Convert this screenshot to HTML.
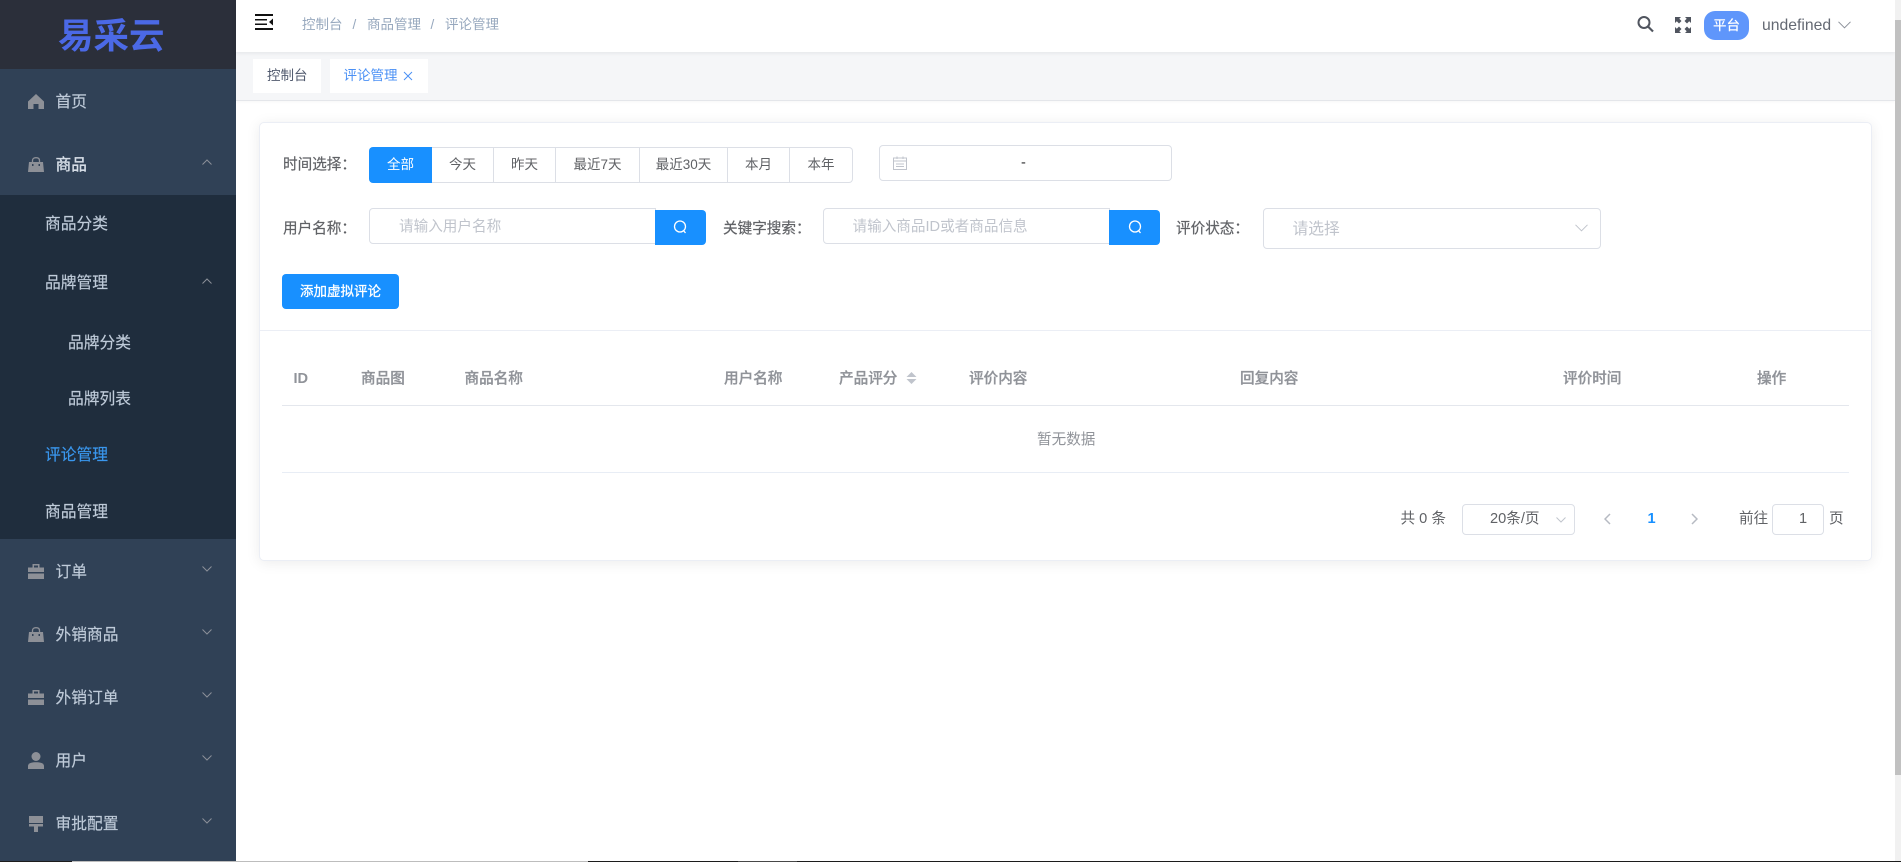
<!DOCTYPE html>
<html lang="zh-CN"><head><meta charset="utf-8"><title>评论管理</title>
<style>
html,body{margin:0;padding:0;width:1901px;height:862px;overflow:hidden;background:#fff}
body{position:relative;font-family:"Liberation Sans","Noto Sans CJK SC",sans-serif}
div,span,svg{position:absolute;box-sizing:border-box}
.t{white-space:nowrap;line-height:20px;height:20px;filter:blur(.25px)}
.m{font-size:15.75px;color:#bfcbd9;-webkit-text-stroke:.15px currentColor}
.l{font-size:14.6px;color:#606266;-webkit-text-stroke:.2px currentColor}
.r{top:147px;height:36px;border:1px solid #dcdfe6;border-left:0;font-size:13.5px;color:#606266;text-align:center;line-height:34px;background:#fff;white-space:nowrap}
.b{font-size:14.6px;color:#909399;font-weight:500;top:369px;-webkit-text-stroke:.3px currentColor}
.i{border:1px solid #dcdfe6;border-radius:4px;background:#fff}
.p{font-size:14.6px;color:#c0c4cc}
.g{font-size:14.6px;color:#606266;top:509px}
.c{fill:none;stroke:#8b9099;stroke-width:1}
</style></head><body>

<!-- sidebar -->
<div style="left:0;top:0;width:236px;height:862px;background:#304156"></div>
<div style="left:0;top:0;width:236px;height:69px;background:#2b2f3a"></div>
<div style="left:0;top:195px;width:236px;height:344px;background:#1f2d3d"></div>
<span class="t" style="left:58px;top:16px;height:40px;line-height:40px;font-size:35.5px;font-weight:700;color:#4b69e6">易采云</span>

<svg style="left:28px;top:94px" width="16" height="15" viewBox="0 0 16 15"><path fill="#8d9097" d="M8 0L16 7.500V15H10.500V10H5.500V15H0V7.500Z"/></svg>
<span class="t m" style="left:55.5px;top:93px">首页</span>

<svg style="left:28px;top:157px" width="16" height="15" viewBox="0 0 16 15"><path fill="#8d9097" d="M1 5H15L16 15H0Z"/><path fill="none" stroke="#8d9097" stroke-width="1.300" d="M4.500 5V3.500C4.500 1.500 6 .7 8 .7s3.500.8 3.500 2.800V5"/><path fill="#304156" d="M4 7h1.500v2H4zM10.500 7H12v2h-1.500z"/></svg>
<span class="t m" style="left:55.5px;top:156px;color:#d5dde6;font-weight:500">商品</span>
<svg class="c" style="left:202px;top:159px" width="10" height="6" viewBox="0 0 10 6"><path d="M.5 5.500L5 1l4.500 4.500"/></svg>

<span class="t m" style="left:45px;top:214.500px">商品分类</span>
<span class="t m" style="left:45px;top:274px">品牌管理</span>
<svg class="c" style="left:202px;top:278px" width="10" height="6" viewBox="0 0 10 6"><path d="M.5 5.500L5 1l4.500 4.500"/></svg>
<span class="t m" style="left:68px;top:333.500px">品牌分类</span>
<span class="t m" style="left:68px;top:390px">品牌列表</span>
<span class="t m" style="left:45px;top:446px;color:#3a97ee">评论管理</span>
<span class="t m" style="left:45px;top:502.500px">商品管理</span>

<svg style="left:28px;top:564px" width="16" height="15" viewBox="0 0 16 15"><path fill="#8d9097" d="M0 3.500H16V8H0zM0 9.500H16V15H0zM4.500 3.500V0H11.500V3.500H10V1.500H6V3.500Z"/></svg>
<span class="t m" style="left:55.5px;top:563px">订单</span>
<svg class="c" style="left:202px;top:566px" width="10" height="6" viewBox="0 0 10 6"><path d="M.5.500L5 5l4.500-4.500"/></svg>

<svg style="left:28px;top:627px" width="16" height="15" viewBox="0 0 16 15"><path fill="#8d9097" d="M1 5H15L16 15H0Z"/><path fill="none" stroke="#8d9097" stroke-width="1.300" d="M4.500 5V3.500C4.500 1.500 6 .7 8 .7s3.500.8 3.500 2.800V5"/><path fill="#304156" d="M4 7h1.500v2H4zM10.500 7H12v2h-1.500z"/></svg>
<span class="t m" style="left:55.5px;top:626px">外销商品</span>
<svg class="c" style="left:202px;top:629px" width="10" height="6" viewBox="0 0 10 6"><path d="M.5.500L5 5l4.500-4.500"/></svg>

<svg style="left:28px;top:690px" width="16" height="15" viewBox="0 0 16 15"><path fill="#8d9097" d="M0 3.500H16V8H0zM0 9.500H16V15H0zM4.500 3.500V0H11.500V3.500H10V1.500H6V3.500Z"/></svg>
<span class="t m" style="left:55.5px;top:689px">外销订单</span>
<svg class="c" style="left:202px;top:692px" width="10" height="6" viewBox="0 0 10 6"><path d="M.5.500L5 5l4.500-4.500"/></svg>

<svg style="left:28px;top:752px" width="16" height="17" viewBox="0 0 16 17"><circle cx="8" cy="4.500" r="4.500" fill="#8d9097"/><path fill="#8d9097" d="M0 17V14C0 11.500 3 10.300 8 10.300s8 1.200 8 3.700v3Z"/></svg>
<span class="t m" style="left:55.5px;top:752px">用户</span>
<svg class="c" style="left:202px;top:755px" width="10" height="6" viewBox="0 0 10 6"><path d="M.5.500L5 5l4.500-4.500"/></svg>

<svg style="left:29px;top:816px" width="14" height="16" viewBox="0 0 14 16"><path fill="#8d9097" d="M0 0H14V7H0zM0 8H14V10.500H0zM5 10.500H9V16H5z"/></svg>
<span class="t m" style="left:55.5px;top:814.500px">审批配置</span>
<svg class="c" style="left:202px;top:818px" width="10" height="6" viewBox="0 0 10 6"><path d="M.5.500L5 5l4.500-4.500"/></svg>

<!-- header -->
<div style="left:236px;top:0;width:1659px;height:52px;background:#fff;z-index:2;box-shadow:0 1px 4px rgba(0,21,41,.08)"></div>
<svg style="left:255px;top:14px;z-index:3" width="18" height="16" viewBox="0 0 18 16"><path fill="#111" d="M0 0H18V2H0zM0 5H12V6.500H0zM0 9.500H12V11H0zM0 14H18V16H0zM18 4.500V11.500L14 8Z"/></svg>
<span class="t" style="left:302px;top:15px;font-size:13.500px;color:#97a8be;z-index:3">控制台</span>
<span class="t" style="left:352.500px;top:15px;font-size:13.500px;color:#97a8be;z-index:3">/</span>
<span class="t" style="left:367px;top:15px;font-size:13.500px;color:#97a8be;z-index:3">商品管理</span>
<span class="t" style="left:430.500px;top:15px;font-size:13.500px;color:#97a8be;z-index:3">/</span>
<span class="t" style="left:445px;top:15px;font-size:13.500px;color:#97a8be;z-index:3">评论管理</span>

<svg style="left:1636.500px;top:15px;z-index:3" width="17" height="18" viewBox="0 0 17 18"><circle cx="7" cy="7.500" r="5.500" fill="none" stroke="#50555f" stroke-width="2"/><path stroke="#50555f" stroke-width="2.200" d="M11 11.500L16 16.500"/></svg>
<svg style="left:1675px;top:17px;z-index:3" width="16" height="16" viewBox="0 0 16 16"><path fill="#50555f" d="M0 0H6L4.300 1.800 6.500 4 4 6.500 1.800 4.300 0 6zM16 0V6L14.200 4.300 12 6.500 9.500 4 11.700 1.800 10 0zM0 16V10L1.800 11.700 4 9.500 6.500 12 4.300 14.200 6 16zM16 16H10L11.700 14.200 9.500 12 12 9.500 14.200 11.700 16 10z"/></svg>
<div style="left:1704px;top:11px;width:45px;height:29px;border-radius:11px;background:#5f96fb;z-index:3;color:#fff;font-size:13.500px;font-weight:500;line-height:29px;text-align:center">平台</div>
<span class="t" style="left:1762px;top:16px;font-size:15.750px;color:#646973;z-index:3">undefined</span>
<svg class="c" style="left:1838px;top:21px;z-index:3" width="13" height="8" viewBox="0 0 13 8"><path d="M.5.800L6.500 6.800l6-6"/></svg>

<!-- tabs -->
<div style="left:236px;top:52px;width:1659px;height:49px;background:#f5f6f8;border-bottom:1px solid #e4e6ea;box-shadow:0 1px 3px rgba(0,0,0,.04)"></div>
<div style="left:253px;top:59px;width:68px;height:34px;background:#fff"></div>
<span class="t" style="left:267px;top:66px;font-size:13.500px;color:#515a6e">控制台</span>
<div style="left:330px;top:59px;width:98px;height:34px;background:#fff"></div>
<span class="t" style="left:343.500px;top:66px;font-size:13.500px;color:#4a90f5">评论管理</span>
<svg style="left:403px;top:71px" width="10" height="10" viewBox="0 0 10 10"><path stroke="#4a90f5" d="M1 1L9 9M9 1L1 9"/></svg>

<!-- card -->
<div style="left:259px;top:122px;width:1613px;height:439px;background:#fff;border:1px solid #ebeef5;border-radius:5px;box-shadow:0 2px 14px rgba(0,0,0,.08)"></div>

<span class="t l" style="left:283px;top:155px">时间选择：</span>
<div style="left:369px;top:147px;width:63px;height:36px;background:#1890ff;border-radius:4px 0 0 4px;color:#fff;font-size:13.500px;text-align:center;line-height:36px">全部</div>
<div class="r" style="left:432px;width:62px">今天</div>
<div class="r" style="left:494px;width:62px">昨天</div>
<div class="r" style="left:556px;width:84px">最近7天</div>
<div class="r" style="left:640px;width:88px">最近30天</div>
<div class="r" style="left:728px;width:62px">本月</div>
<div class="r" style="left:790px;width:63px;border-right:1px solid #dcdfe6;border-radius:0 4px 4px 0">本年</div>

<div class="i" style="left:879px;top:145px;width:293px;height:36px"></div>
<svg style="left:893px;top:156px" width="14" height="14" viewBox="0 0 14 14"><path fill="none" stroke="#c0c4cc" d="M.5 2H13.500V13.500H.5zM.5 5H13.500M4 .5V3M10 .5V3M3 8H11M3 10.500H11"/></svg>
<span class="t" style="left:1021px;top:153px;font-size:14.600px;color:#303133">-</span>

<span class="t l" style="left:283px;top:219px">用户名称：</span>
<div class="i" style="left:369px;top:208px;width:287px;height:36px;border-radius:4px 0 0 4px"></div>
<span class="t p" style="left:399px;top:217px">请输入用户名称</span>
<div style="left:655px;top:210px;width:51px;height:35px;background:#1890ff;border-radius:0 4px 4px 0"></div>
<svg style="left:673px;top:220px" width="14" height="14" viewBox="0 0 14 14"><circle cx="7" cy="6.500" r="5.500" fill="none" stroke="#fff" stroke-width="1.300"/><path stroke="#fff" stroke-width="1.300" d="M10.500 10.500L12.500 13"/></svg>

<span class="t l" style="left:723px;top:219px">关键字搜索：</span>
<div class="i" style="left:823px;top:208px;width:287px;height:36px;border-radius:4px 0 0 4px"></div>
<span class="t p" style="left:852.500px;top:217px">请输入商品ID或者商品信息</span>
<div style="left:1109px;top:210px;width:51px;height:35px;background:#1890ff;border-radius:0 4px 4px 0"></div>
<svg style="left:1128px;top:220px" width="14" height="14" viewBox="0 0 14 14"><circle cx="7" cy="6.500" r="5.500" fill="none" stroke="#fff" stroke-width="1.300"/><path stroke="#fff" stroke-width="1.300" d="M10.500 10.500L12.500 13"/></svg>

<span class="t l" style="left:1176px;top:219px">评价状态：</span>
<div class="i" style="left:1263px;top:208px;width:338px;height:41px"></div>
<span class="t" style="left:1292.500px;top:220px;font-size:15.750px;color:#c0c4cc">请选择</span>
<svg class="c" style="left:1575px;top:224px;stroke:#c0c4cc" width="13" height="8" viewBox="0 0 13 8"><path d="M.5.800L6.500 6.800l6-6"/></svg>

<div style="left:282px;top:274px;width:117px;height:35px;background:#1890ff;border-radius:4px;color:#fff;font-size:13.500px;text-align:center;line-height:35px;-webkit-text-stroke:.3px #fff">添加虚拟评论</div>
<div style="left:260px;top:330px;width:1611px;height:1px;background:#ebeef5"></div>

<!-- table -->
<span class="t b" style="left:293.500px;font-weight:700;-webkit-text-stroke:0">ID</span>
<span class="t b" style="left:361px">商品图</span>
<span class="t b" style="left:464.500px">商品名称</span>
<span class="t b" style="left:724px">用户名称</span>
<span class="t b" style="left:839px">产品评分</span>
<svg style="left:906px;top:372px" width="11" height="12" viewBox="0 0 11 12"><path fill="#c0c4cc" d="M5.500 0L10.500 5H.5zM.5 7H10.500L5.500 12Z"/></svg>
<span class="t b" style="left:969px">评价内容</span>
<span class="t b" style="left:1240px">回复内容</span>
<span class="t b" style="left:1563px">评价时间</span>
<span class="t b" style="left:1757px">操作</span>
<div style="left:282px;top:405px;width:1567px;height:1px;background:#e4e7ed"></div>
<span class="t" style="left:1037px;top:430px;font-size:14.600px;color:#909399">暂无数据</span>
<div style="left:282px;top:472px;width:1567px;height:1px;background:#e8edf5"></div>

<!-- pagination -->
<span class="t g" style="left:1400.500px">共 0 条</span>
<div class="i" style="left:1462px;top:504px;width:113px;height:31px"></div>
<span class="t g" style="left:1490px">20条/页</span>
<svg class="c" style="left:1556px;top:517px;stroke:#c0c4cc" width="10" height="6" viewBox="0 0 10 6"><path d="M.5.500L5 5l4.500-4.500"/></svg>
<svg class="c" style="left:1604px;top:513px;stroke:#b6bac2;stroke-width:1.500" width="7" height="12" viewBox="0 0 7 12"><path d="M6 1L1 6l5 5"/></svg>
<span class="t" style="left:1647.500px;top:509px;font-size:14.600px;font-weight:700;color:#1890ff">1</span>
<svg class="c" style="left:1691px;top:513px;stroke:#b6bac2;stroke-width:1.500" width="7" height="12" viewBox="0 0 7 12"><path d="M1 1l5 5-5 5"/></svg>
<span class="t g" style="left:1739px">前往</span>
<div class="i" style="left:1772px;top:504px;width:52px;height:31px"></div>
<span class="t g" style="left:1799px">1</span>
<span class="t g" style="left:1829px">页</span>

<!-- scrollbars -->
<div style="left:1895px;top:0;width:6px;height:862px;background:#f1f1f1;z-index:4"></div>
<div style="left:1895px;top:20px;width:6px;height:755px;background:#c1c1c1;z-index:4"></div>
<div style="left:0;top:861px;width:1901px;height:1px;background:#1c1c1c;z-index:5"></div>
<div style="left:72px;top:861px;width:516px;height:1px;background:#bdbdbd;z-index:5"></div>
<div style="left:738px;top:861px;width:59px;height:1px;background:#484848;z-index:5"></div>
</body></html>
